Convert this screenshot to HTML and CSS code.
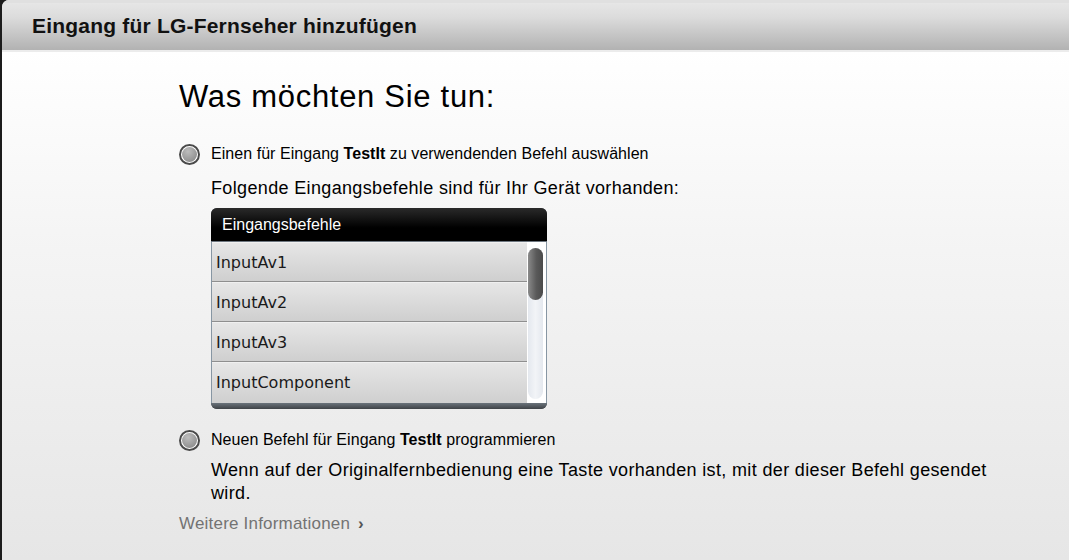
FILE: index.html
```html
<!DOCTYPE html>
<html lang="de">
<head>
<meta charset="utf-8">
<link rel="stylesheet" href="styles.css">
</head>
<body>
<div class="window">
  <div class="titlebar">Eingang für LG-Fernseher hinzufügen</div>
  <div class="content">
    <h1 class="heading">Was möchten Sie tun:</h1>

    <div class="option">
      <span class="radio"></span>
      <span class="option-label">Einen für Eingang <b>TestIt</b> zu verwendenden Befehl auswählen</span>
    </div>
    <div class="indent">
      <p class="info">Folgende Eingangsbefehle sind für Ihr Gerät vorhanden:</p>
      <div class="list">
        <div class="list-head">Eingangsbefehle</div>
        <div class="list-body">
          <div class="rows">
            <div class="row">InputAv1</div>
            <div class="row">InputAv2</div>
            <div class="row">InputAv3</div>
            <div class="row">InputComponent</div>
          </div>
          <div class="scroll">
            <div class="track"><div class="thumb"></div></div>
          </div>
        </div>
        <div class="list-foot"></div>
      </div>
    </div>

    <div class="option option-2">
      <span class="radio"></span>
      <span class="option-label">Neuen Befehl für Eingang <b>TestIt</b> programmieren</span>
    </div>
    <div class="indent">
      <p class="desc">Wenn auf der Originalfernbedienung eine Taste vorhanden ist, mit der dieser Befehl gesendet wird.</p>
    </div>
    <a class="more">Weitere Informationen <span class="chev">&#x203A;</span></a>
  </div>
</div>
</body>
</html>
```

FILE: styles.css
```css
* { box-sizing: border-box; }
html, body { margin: 0; padding: 0; }
body {
  width: 1069px;
  height: 560px;
  overflow: hidden;
  background: #1c1c1c;
  font-family: "Liberation Sans", Arial, sans-serif;
  color: #000;
}
.window {
  height: 560px;
  margin-left: 2px;
  border-top-left-radius: 7px;
  overflow: hidden;
  background: linear-gradient(to bottom, #ffffff 50px, #f4f4f4 250px, #e6e6e6 560px);
}
.titlebar {
  height: 52px;
  padding-left: 30px;
  font-size: 21px;
  letter-spacing: 0.2px;
  font-weight: bold;
  color: #111;
  border-top: 3px solid #e0e0e0;
  border-bottom: 2px solid #ececec;
  line-height: 46px;
  background: linear-gradient(to bottom, #e6e6e6 0%, #dcdcdc 30%, #b2b2b2 100%);
}
.content {
  padding-left: 177px;
}
.heading {
  margin: 27px 0 0 0;
  font-size: 31px;
  letter-spacing: 0.7px;
  line-height: 36px;
  font-weight: normal;
}
.option {
  display: flex;
  align-items: center;
  gap: 11px;
  height: 22px;
  margin-top: 28px;
}
.option-2 {
  margin-top: 20px;
}
.radio {
  width: 21px;
  height: 21px;
  border-radius: 50%;
  border: 2px solid #4a4a4a;
  background: #fff;
  position: relative;
  flex: none;
}
.radio::after {
  content: "";
  position: absolute;
  left: 1px;
  top: 1px;
  width: 15px;
  height: 15px;
  border-radius: 50%;
  background: radial-gradient(circle at 40% 30%, #bdbdbd, #8e8e8e 80%);
}
.option-label {
  font-size: 16px;
  letter-spacing: 0.05px;
}
.indent {
  padding-left: 32px;
}
.info {
  margin: 13px 0 0 0;
  font-size: 18px;
  letter-spacing: 0.35px;
  line-height: 20px;
}
.list {
  margin-top: 10px;
  width: 336px;
  border-radius: 6px;
  overflow: hidden;
  background: #4a4f55;
}
.list-head {
  height: 34px;
  padding-left: 11px;
  line-height: 33px;
  color: #fff;
  font-size: 16px;
  background: linear-gradient(to bottom, #2a2a2a, #000 60%);
  border-bottom: 1px solid #6e7780;
}
.list-body {
  display: flex;
  height: 161px;
  border-left: 1px solid #8796a3;
  background: #fff;
}
.rows {
  width: 315px;
}
.row {
  height: 40px;
  padding-left: 4px;
  line-height: 39px;
  font-family: "DejaVu Sans", Verdana, sans-serif;
  font-size: 16px;
  color: #1a1a1a;
  border-top: 1px solid #f0f0f0;
  border-bottom: 1px solid #8f8f8f;
  background: linear-gradient(to bottom, #e6e6e6, #cfcfcf);
}
.row:last-child {
  height: 41px;
  border-bottom: none;
}
.scroll {
  flex: 1;
  padding: 6px 3px 4px 1px;
  border-right: 1px solid #8796a3;
}
.track {
  height: 100%;
  border-radius: 8px;
  background: linear-gradient(to right, #e4e8ee, #f2f4f7, #e4e8ee);
}
.thumb {
  height: 52px;
  border-radius: 9px;
  background: linear-gradient(to right, #8a8a8a, #5a5a5a 55%, #4a4a4a);
}
.list-foot {
  height: 6px;
  background: linear-gradient(to bottom, #6a737b, #3e4246);
}
.desc {
  margin: 8px 0 0 0;
  font-size: 18px;
  letter-spacing: 0.35px;
  line-height: 23px;
  max-width: 800px;
}
.more {
  display: inline-block;
  margin-top: 9px;
  font-size: 17px;
  letter-spacing: 0.2px;
  line-height: 20px;
  color: #737373;
}
.chev {
  font-weight: bold;
  color: #555;
  margin-left: 3px;
}
```
